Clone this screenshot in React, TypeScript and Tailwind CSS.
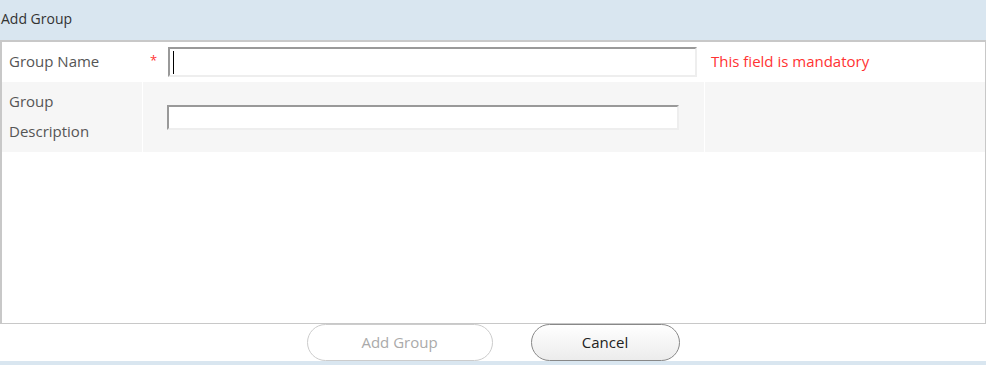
import React from "react";

export default function App() {
  return (
    <div
      className="w-[986px] h-[365px] bg-white flex flex-col overflow-hidden"
      style={{ fontFamily: '"Open Sans", "Noto Sans", sans-serif' }}
    >
      <div className="h-[40px] shrink-0 bg-[#d9e6f0] text-[14px] text-[#333] leading-[38px] pl-px">
        Add Group
      </div>
      <div className="h-[284px] shrink-0 border-t-2 border-l-2 border-r border-b border-[#c8c8c8] bg-white flex flex-col">
        <div className="h-[40px] flex items-center bg-white">
          <div className="w-[141px] pl-[7px] pb-px text-[15px] text-[#555]">Group Name</div>
          <div className="w-[25px] pl-[7px] text-[#f33] text-[13px] leading-none pt-[2px] self-start mt-[10px]">*</div>
          <div className="w-[529px] h-[30px] border-2 border-t-[#999] border-l-[#999] border-b-[#eee] border-r-[#eee] bg-white flex items-center pl-[3px]">
            <div className="w-px h-[23px] bg-black" />
          </div>
          <div className="pl-[14px] pb-px text-[15px] text-[#f33]">This field is mandatory</div>
        </div>
        <div className="h-[70px] flex bg-[#f6f6f6]">
          <div className="w-[141px] pl-[7px] pt-[4px] text-[15px] leading-[30px] text-[#555] border-r border-white">
            Group
            <br />
            Description
          </div>
          <div className="w-[562px] pl-[24px] pt-[23px] border-r border-white">
            <div className="w-[512px] h-[25px] border-2 border-t-[#999] border-l-[#999] border-b-[#eee] border-r-[#eee] bg-white" />
          </div>
          <div className="flex-1" />
        </div>
        <div className="flex-1" />
      </div>
      <div className="h-[37px] shrink-0 bg-white flex justify-center gap-[38px]">
        <button className="w-[186px] h-[37px] rounded-full border border-[#ccc] bg-white text-[15px] text-[#aaa]">
          Add Group
        </button>
        <button className="w-[149px] h-[37px] rounded-full border border-[#888] bg-gradient-to-b from-white to-[#ececec] text-[15px] text-[#222]">
          Cancel
        </button>
      </div>
      <div className="flex-1 bg-[#d9e6f0]" />
    </div>
  );
}
